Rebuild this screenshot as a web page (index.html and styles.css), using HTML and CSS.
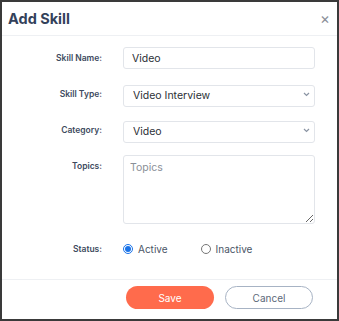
FILE: index.html
```html
<!DOCTYPE html>
<html lang="en">
<head>
    <meta charset="UTF-8">
    <title>Add Skill</title>
    <link rel="stylesheet" href="styles.css">
</head>
<body>

<div class="modal">
    <div class="modal-header">
        <h1>Add Skill</h1>
        <span class="close">&times;</span>
    </div>

    <form class="modal-body">
        <label class="field-label">Skill Name:</label>
        <input class="field" type="text" value="Video">

        <label class="field-label">Skill Type:</label>
        <div class="select-wrap">
            <select class="field">
                <option>Video Interview</option>
            </select>
            <svg class="chevron" width="7" height="5" viewBox="0 0 7 5"><path d="M1 1l2.5 2.5L6 1" fill="none" stroke="#8a94a3" stroke-width="1.2"/></svg>
        </div>

        <label class="field-label">Category:</label>
        <div class="select-wrap">
            <select class="field">
                <option>Video</option>
            </select>
            <svg class="chevron" width="7" height="5" viewBox="0 0 7 5"><path d="M1 1l2.5 2.5L6 1" fill="none" stroke="#8a94a3" stroke-width="1.2"/></svg>
        </div>

        <label class="field-label">Topics:</label>
        <textarea class="field topics" placeholder="Topics"></textarea>

        <label class="field-label status-label">Status:</label>
        <div class="radios">
            <label class="radio"><input type="radio" name="status" checked> Active</label>
            <label class="radio"><input type="radio" name="status"> Inactive</label>
        </div>
    </form>

    <div class="modal-footer">
        <button class="btn btn-save" type="button">Save</button>
        <button class="btn btn-cancel" type="button">Cancel</button>
    </div>
</div>

</body>
</html>
```

FILE: styles.css
```css
* {
    box-sizing: border-box;
}
body {
    margin: 0;
    font-family: 'Inter', 'Open Sans', sans-serif;
    background-color: white;
}
.modal {
    width: 339px;
    height: 321px;
    border: 2px solid #3a3a3a;
    background-color: white;
    display: flex;
    flex-direction: column;
}
.modal-header {
    height: 34px;
    display: flex;
    align-items: center;
    justify-content: space-between;
    padding: 0 7px 0 6px;
    border-bottom: 1px solid #eef0f3;
}
.modal-header h1 {
    margin: 0;
    font-size: 14.5px;
    font-weight: 700;
    color: #33415a;
}
.close {
    font-size: 15px;
    color: #8a8f98;
    line-height: 1;
}
.modal-body {
    display: grid;
    grid-template-columns: 100px 192px;
    column-gap: 21px;
    row-gap: 14px;
    padding: 11px 0 0 0;
    height: 244px;
    border-bottom: 1px solid #eef0f3;
    align-content: start;
}
.field-label {
    text-align: right;
    font-size: 8.5px;
    font-weight: 600;
    color: #3d4a5e;
    padding-top: 6px;
}
.field {
    width: 192px;
    height: 22px;
    border: 1px solid #e2e5ea;
    border-radius: 3px;
    background-color: white;
    font-family: inherit;
    font-size: 10.5px;
    color: #2b2f36;
    padding: 0 8px;
    outline: none;
}
select.field {
    appearance: none;
    -webkit-appearance: none;
    padding-left: 9px;
}
.select-wrap {
    position: relative;
    width: 192px;
    height: 22px;
}
.chevron {
    position: absolute;
    right: 5px;
    top: 9px;
}
.topics {
    height: 69px;
    resize: vertical;
    padding: 5px 6px;
}
.topics::placeholder {
    color: #8a8f98;
}
.status-label {
    padding-top: 6px;
}
.radios {
    display: flex;
    gap: 33px;
    height: 22px;
    align-items: center;
    font-size: 10px;
    color: #4a5566;
}
.radio {
    display: flex;
    align-items: center;
    gap: 5px;
}
.radio input {
    margin: 0;
    width: 10px;
    height: 10px;
    accent-color: #1a73e8;
}
.modal-footer {
    flex: 1;
    display: flex;
    justify-content: flex-end;
    align-items: center;
    gap: 11px;
    padding: 0 24px 4px 0;
}
.btn {
    width: 88px;
    height: 23px;
    border-radius: 12px;
    font-family: inherit;
    font-size: 10px;
    cursor: pointer;
}
.btn-save {
    background-color: #ff6b4c;
    color: white;
    border: none;
}
.btn-cancel {
    background-color: white;
    color: #5c6879;
    border: 1px solid #a7b3c4;
}
```
